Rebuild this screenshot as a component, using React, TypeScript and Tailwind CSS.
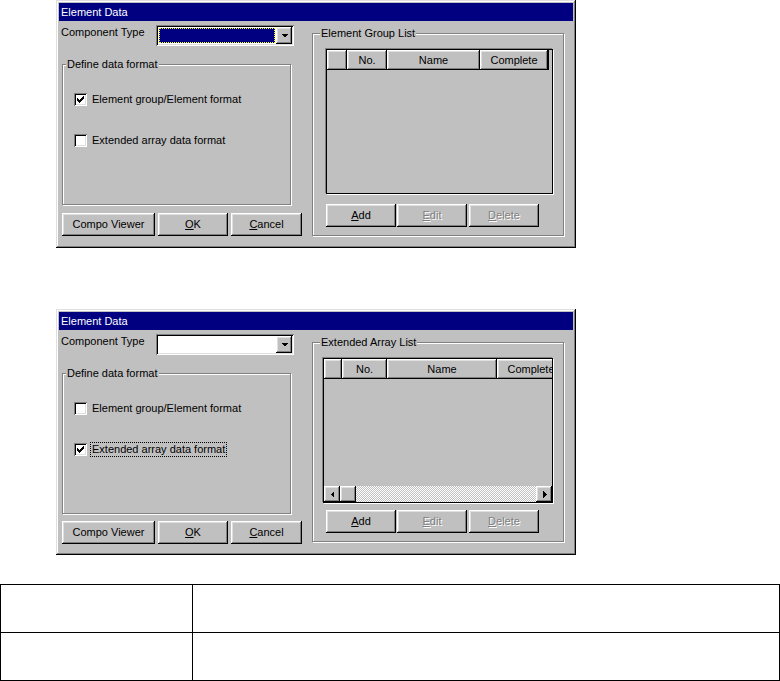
const raised =
  'shadow-[inset_-1px_-1px_0_#000,inset_1px_1px_0_#fff,inset_-2px_-2px_0_#808080,inset_2px_2px_0_#dfdfdf]';
const sunken =
  'shadow-[inset_1px_1px_0_#808080,inset_-1px_-1px_0_#fff,inset_2px_2px_0_#000,inset_-2px_-2px_0_#dfdfdf]';
const etched = 'border border-[#808080] shadow-[inset_1px_1px_0_#fff,1px_1px_0_#fff]';
const disabled = 'text-[#808080] [text-shadow:1px_1px_0_#fff]';

const Check = () => (
  <svg width="7" height="7" viewBox="0 0 7 7" shapeRendering="crispEdges">
    <path d="M6 0h1v3h-1v1h-1v1h-1v1h-1v1h-1v-1h-1v-1h-1v-3h1v1h1v1h1v-1h1v-1h1z" fill="#000" />
  </svg>
);

const Arrow = ({ dir }: { dir: 'down' | 'left' | 'right' }) => (
  <svg width="7" height="7" viewBox="0 0 7 7" shapeRendering="crispEdges">
    {dir === 'down' && <polygon points="0,2 7,2 3.5,5.5" fill="#000" />}
    {dir === 'left' && <polygon points="5,0 5,7 1.5,3.5" fill="#000" />}
    {dir === 'right' && <polygon points="2,0 2,7 5.5,3.5" fill="#000" />}
  </svg>
);

const Button = ({ w, children, off }: { w: string; children: React.ReactNode; off?: boolean }) => (
  <div className={`${w} h-[23px] bg-[#c0c0c0] ${raised} flex items-center justify-center ${off ? disabled : 'text-black'}`}>
    {children}
  </div>
);

const CheckRow = ({ checked, focus, label, mt }: { checked: boolean; focus?: boolean; label: string; mt: string }) => (
  <div className={`${mt} ml-[11px] flex items-center h-[13px]`}>
    <div className={`w-[13px] h-[13px] bg-white ${sunken} flex items-center justify-center shrink-0`}>
      {checked && <Check />}
    </div>
    <span className={`ml-[4px] px-[1px] leading-[13px] ${focus ? 'outline outline-1 outline-dotted outline-black' : ''}`}>
      {label}
    </span>
  </div>
);

const Header = ({ w, label }: { w: string; label?: string }) => (
  <div className={`${w} h-[20px] shrink-0 ${raised} flex items-center justify-center whitespace-nowrap overflow-hidden`}>
    {label}
  </div>
);

function Dialog({ second }: { second?: boolean }) {
  return (
    <div
      className={`w-[520px] ${second ? 'h-[246px]' : 'h-[248px]'} ml-[56px] bg-[#c0c0c0] p-[3px] flex flex-col shadow-[inset_-1px_-1px_0_#000,inset_1px_1px_0_#dfdfdf,inset_-2px_-2px_0_#808080,inset_2px_2px_0_#fff]`}
    >
      <div className="h-[18px] bg-[#000080] text-white pl-[2px] flex items-center shrink-0">Element Data</div>

      <div className="flex">
        {/* left column */}
        <div className="ml-[3px] w-[240px] flex flex-col">
          <div className="mt-[4px] h-[21px] flex items-start">
            <span className="w-[95px] -ml-[1px] mt-[1px] leading-[13px]">Component Type</span>
            <div className={`w-[138px] h-[21px] p-[2px] flex bg-white ${sunken}`}>
              <div className="flex-1 p-[1px]">
                {!second && <div className="h-full bg-[#000080] border border-dotted border-[#ffff00]" />}
              </div>
              <div className={`w-[16px] h-[17px] bg-[#c0c0c0] ${raised} flex items-center justify-center`}>
                <Arrow dir="down" />
              </div>
            </div>
          </div>

          <div className={`mt-[18px] w-[229px] h-[141px] ${etched} flex flex-col`}>
            <span className="-mt-[7px] ml-[3px] px-[1px] bg-[#c0c0c0] w-fit leading-[13px]">Define data format</span>
            <CheckRow mt="mt-[22px]" checked={!second} label="Element group/Element format" />
            <CheckRow mt="mt-[28px]" checked={!!second} focus={second} label="Extended array data format" />
          </div>

          <div className={`${second ? 'mt-[7px]' : 'mt-[8px]'} flex gap-[3px]`}>
            <Button w="w-[93px]">Compo Viewer</Button>
            <Button w="w-[70px]">
              <span className="underline underline-offset-1">O</span>K
            </Button>
            <Button w="w-[71px]">
              <span className="underline underline-offset-1">C</span>ancel
            </Button>
          </div>
        </div>

        {/* right column */}
        <div className={`ml-[10px] mt-[12px] w-[252px] ${second ? 'h-[200px]' : 'h-[203px]'} ${etched} flex flex-col`}>
          <span className="-mt-[7px] ml-[7px] px-[1px] bg-[#c0c0c0] w-fit leading-[13px]">
            {second ? 'Extended Array List' : 'Element Group List'}
          </span>

          <div
            className={`mt-[9px] ${second ? 'ml-[10px] w-[230px]' : 'ml-[13px] w-[227px]'} h-[145px] border border-black shadow-[-1px_-1px_0_#808080,1px_1px_0_#fff] flex flex-col`}
          >
            <div className="flex overflow-hidden shrink-0">
              {second ? (
                <>
                  <Header w="w-[18px]" />
                  <Header w="w-[45px]" label="No." />
                  <Header w="w-[110px]" label="Name" />
                  <Header w="w-[68px]" label="Complete" />
                </>
              ) : (
                <>
                  <Header w="w-[20px]" />
                  <Header w="w-[40px]" label="No." />
                  <Header w="w-[93px]" label="Name" />
                  <Header w="w-[68px]" label="Complete" />
                  <div className="w-[1px] h-[20px] bg-black shrink-0" />
                </>
              )}
            </div>
            <div className="flex-1" />
            {second && (
              <div className="h-[16px] flex shrink-0">
                <div className={`w-[16px] h-[16px] ${raised} flex items-center justify-center`}>
                  <Arrow dir="left" />
                </div>
                <div className={`w-[16px] h-[16px] ${raised}`} />
                <div className="flex-1 bg-[repeating-conic-gradient(#c0c0c0_0%_25%,#fff_0%_50%)] bg-[length:2px_2px]" />
                <div className={`w-[16px] h-[16px] ${raised} flex items-center justify-center`}>
                  <Arrow dir="right" />
                </div>
              </div>
            )}
          </div>

          <div className={`${second ? 'mt-[7px]' : 'mt-[10px]'} ml-[13px] flex gap-[1px]`}>
            <Button w="w-[70px]">
              <span className="underline underline-offset-1">A</span>dd
            </Button>
            <Button w="w-[70px]" off>
              <span className="underline underline-offset-1">E</span>dit
            </Button>
            <Button w="w-[70px] ml-[1px]" off>
              <span className="underline underline-offset-1">D</span>elete
            </Button>
          </div>
        </div>
      </div>
    </div>
  );
}

export default function App() {
  return (
    <div className="w-[780px] h-[681px] bg-white font-['Liberation_Sans',Arial,sans-serif] text-[11px] text-black overflow-hidden">
      <Dialog />
      <div className="mt-[61px]">
        <Dialog second />
      </div>
      <table className="mt-[29px] w-[780px] border-collapse">
        <tbody>
          <tr className="h-[48px]">
            <td className="w-[192px] border border-black" />
            <td className="border border-black" />
          </tr>
          <tr className="h-[48px]">
            <td className="w-[192px] border border-black" />
            <td className="border border-black" />
          </tr>
        </tbody>
      </table>
    </div>
  );
}
